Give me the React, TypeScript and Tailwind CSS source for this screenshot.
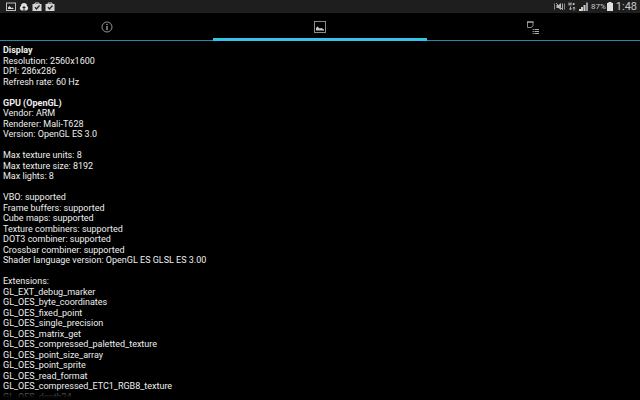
import type { ReactNode } from "react";
import { useState } from "react";

const display = ["Resolution: 2560x1600", "DPI: 286x286", "Refresh rate: 60 Hz"];

const gpu = [
  "Vendor: ARM",
  "Renderer: Mali-T628",
  "Version: OpenGL ES 3.0",
  "",
  "Max texture units: 8",
  "Max texture size: 8192",
  "Max lights: 8",
  "",
  "VBO: supported",
  "Frame buffers: supported",
  "Cube maps: supported",
  "Texture combiners: supported",
  "DOT3 combiner: supported",
  "Crossbar combiner: supported",
  "Shader language version: OpenGL ES GLSL ES 3.00",
  "",
  "Extensions:",
  "GL_EXT_debug_marker",
  "GL_OES_byte_coordinates",
  "GL_OES_fixed_point",
  "GL_OES_single_precision",
  "GL_OES_matrix_get",
  "GL_OES_compressed_paletted_texture",
  "GL_OES_point_size_array",
  "GL_OES_point_sprite",
  "GL_OES_read_format",
  "GL_OES_compressed_ETC1_RGB8_texture",
  "GL_OES_depth24",
];

const CheckBagIcon = () => (
  <svg className="w-[10px] h-[10px]" viewBox="0 0 20 20" fill="none">
    <path d="M6 5V2h8v3" stroke="#d4d4d4" strokeWidth="2" />
    <path d="M1 4h18v14H1z" fill="#d4d4d4" />
    <path d="M6 10l3 4 6-7" stroke="#222" strokeWidth="2.5" />
  </svg>
);

const StatusBar = () => (
  <div className="flex h-[13px] shrink-0 items-center justify-between bg-[#1e1e1e] pl-[6px] pr-[3px] text-[#c8c8c8]">
    <div className="flex items-center gap-[3px]">
      <svg className="w-[10px] h-[10px]" viewBox="0 0 20 20">
        <rect x="1" y="2" width="18" height="15" fill="none" stroke="#bdbdbd" strokeWidth="2" />
        <path d="M4 14v-3l3-3 4 4 2-1 3 3z" fill="#dcdcdc" />
      </svg>
      <svg className="w-[10px] h-[10px]" viewBox="0 0 20 20">
        <path d="M5 17a5 5 0 0 1-1-9 6 6 0 0 1 12 0 5 5 0 0 1-1 9z" fill="#dedede" />
        <path d="M10 8l4 4h-3v5H9v-5H6z" fill="#1e1e1e" />
      </svg>
      <CheckBagIcon />
      <CheckBagIcon />
    </div>
    <div className="flex items-center">
      <svg className="mr-[3px] w-[11px] h-[9px]" viewBox="0 0 22 18" fill="none">
        <path d="M1 3v12M21 3v12" stroke="#888" strokeWidth="2" />
        <path d="M5 6h4l5-4v14l-5-4H5z" fill="#bbb" />
        <path d="M4 2l14 14M17 3v12" stroke="#aaa" strokeWidth="2" />
      </svg>
      <svg className="mr-[3px] w-[8px] h-[9px]" viewBox="0 0 16 18" fill="none">
        <path d="M2 1v6M2 4h4M6 1v6M9 4h5M11 2v4" stroke="#bbb" strokeWidth="2" />
        <path d="M5 9v7M3 13l2 3 2-3M12 17v-7M10 13l2-3 2 3" stroke="#aaa" strokeWidth="2" />
      </svg>
      <svg className="mr-[3px] w-[9px] h-[9px]" viewBox="0 0 18 18">
        <path d="M0 14h4v4H0z" fill="#ddd" />
        <path d="M4 10h4v8H4zM9 6h4v12H9z" fill="#ccc" />
        <path d="M14 1h4v17h-4z" fill="#999" />
      </svg>
      <span className="mr-px text-[8px] leading-none">87%</span>
      <svg className="mr-[3px] w-[6px] h-[9px]" viewBox="0 0 12 18">
        <path d="M3 0h6v2h3v16H0V2h3z" fill="#e0e0e0" />
      </svg>
      <span className="text-[11px] leading-none">1:48</span>
    </div>
  </div>
);

const tabs: { name: string; icon: ReactNode }[] = [
  {
    name: "Info",
    icon: (
      <svg className="w-3 h-3" viewBox="0 0 24 24" fill="none" stroke="#929292" strokeWidth="2">
        <circle cx="12" cy="12" r="10" />
        <path d="M12 10v8M12 6v2" strokeWidth="3" />
      </svg>
    ),
  },
  {
    name: "Graphics",
    icon: (
      <svg className="w-3 h-3" viewBox="0 0 24 24">
        <rect x="1" y="1" width="22" height="22" fill="none" stroke="#8c8c8c" strokeWidth="2" />
        <path d="M4 19v-5l3-3 4 4 4-1 5 3v2z" fill="#c8c8c8" />
      </svg>
    ),
  },
  {
    name: "Sensors",
    icon: (
      <svg className="w-[14px] h-[14px]" viewBox="0 0 28 28" fill="none">
        <path d="M3 2v11h7l4-3V2" stroke="#888" strokeWidth="2" />
        <path d="M2 2h13" stroke="#aaa" strokeWidth="3" />
        <path d="M13 17h3M13 21h3M13 25h3" stroke="#888" strokeWidth="2" />
        <path d="M17 17h9M17 21h9M17 25h9" stroke="#aaa" strokeWidth="2" />
      </svg>
    ),
  },
];

export default function App() {
  const [active, setActive] = useState("Graphics");
  return (
    <div className="flex h-screen flex-col overflow-hidden bg-black font-[Roboto,sans-serif] text-white">
      <StatusBar />
      <div role="tablist" className="grid h-7 shrink-0 grid-cols-3">
        {tabs.map((tab) => (
          <button
            key={tab.name}
            role="tab"
            aria-label={tab.name}
            aria-selected={active === tab.name}
            onClick={() => setActive(tab.name)}
            className={
              active === tab.name
                ? "flex flex-col items-center justify-between border-b-3 border-[#35c3ee] pt-2"
                : "flex flex-col items-center justify-between border-b border-[#2488ad] pt-2"
            }
          >
            {tab.icon}
          </button>
        ))}
      </div>
      <div className="relative min-h-0 flex-1 overflow-y-auto px-[3px] pt-1 [scrollbar-width:none]">
        <div className="grid auto-rows-[11px_10px] text-[9px] leading-[11px] text-[#eee]">
          <h2 className="font-bold">Display</h2>
          {display.map((line) => (
            <p key={line}>{line}</p>
          ))}
          <p />
          <h2 className="font-bold">GPU (OpenGL)</h2>
          {gpu.map((line, i) => (
            <p key={i}>{line}</p>
          ))}
        </div>
      </div>
      {/* fade over the end of the list */}
      <div className="pointer-events-none fixed inset-x-0 bottom-0 h-[10px] bg-linear-to-b from-black/40 to-black to-80%" />
    </div>
  );
}
